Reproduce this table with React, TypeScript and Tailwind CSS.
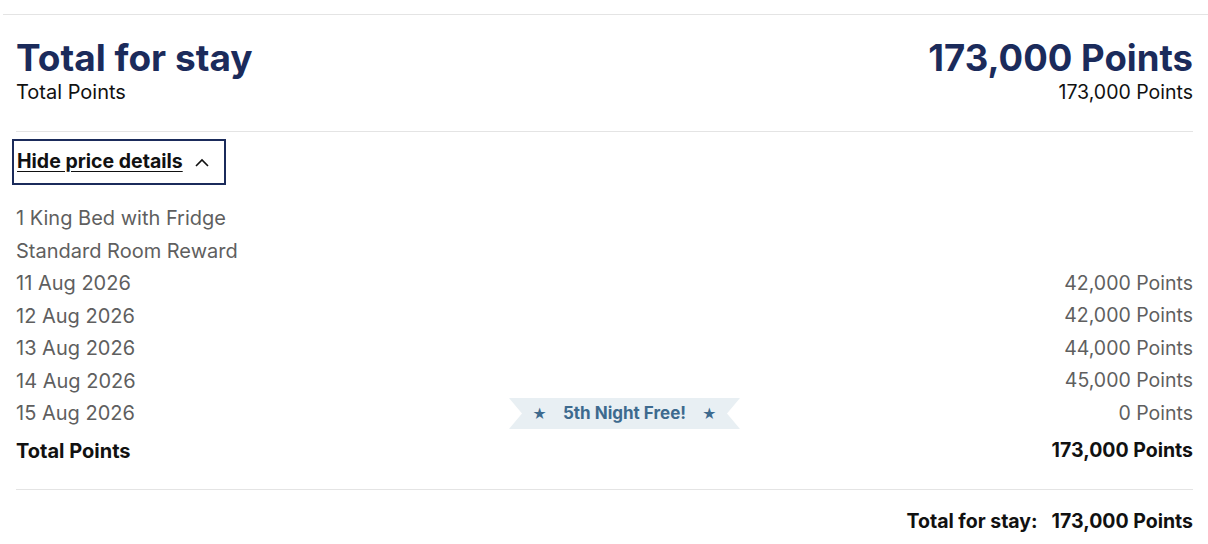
import React from "react";

const rows = [
  { d: "11 Aug 2026", p: "42,000 Points" },
  { d: "12 Aug 2026", p: "42,000 Points" },
  { d: "13 Aug 2026", p: "44,000 Points" },
  { d: "14 Aug 2026", p: "45,000 Points" },
];

function Ribbon() {
  return (
    <div className="relative flex h-[31px] w-[231px] items-center justify-center">
      <svg className="absolute inset-0" width="231" height="31" viewBox="0 0 231 31">
        <polygon points="0,0 231,0 218,15.5 231,31 0,31 13,15.5" fill="#e8eff3" />
      </svg>
      <span className="relative flex items-center gap-[16px] text-[17px] font-bold text-[#3d6a8e]">
        <span className="text-[14px]">★</span>
        <span>5th Night Free!</span>
        <span className="text-[14px]">★</span>
      </span>
    </div>
  );
}

export default function App() {
  return (
    <div className="w-[1208px] bg-white pt-[14px] font-['Inter',sans-serif]">
      <div className="ml-[3px] border-t border-[#e4e4e4]" />
      <div className="pl-[16px] pr-[15px]">
        <div className="flex items-start justify-between pt-[21px] pb-[27px] border-b border-[#e4e4e4]">
          <div>
            <div className="text-[37px] font-bold leading-[44px] text-[#1b2b5b]">Total for stay</div>
            <div className="text-[20px] leading-[24px] text-[#111]">Total Points</div>
          </div>
          <div className="text-right">
            <div className="text-[36.5px] font-bold leading-[44px] text-[#1b2b5b]">173,000 Points</div>
            <div className="text-[19.5px] leading-[24px] text-[#111]">173,000 Points</div>
          </div>
        </div>
        <div className="pt-[7px]">
          <button className="-ml-[4px] flex h-[46px] items-center gap-[12px] border-2 border-[#1b2b5b] px-[3px] pr-[15px]">
            <span className="text-[19.5px] font-bold text-[#111] underline underline-offset-[3px]">Hide price details</span>
            <svg width="14" height="9" viewBox="0 0 14 9" fill="none">
              <path d="M1 8 L7 2 L13 8" stroke="#111" strokeWidth="1.6" />
            </svg>
          </button>
        </div>
        <div className="pt-[17px] text-[20px] text-[#5f5f5f]">
          <div className="h-[32.5px] leading-[32.5px]">1 King Bed with Fridge</div>
          <div className="h-[32.5px] leading-[32.5px]">Standard Room Reward</div>
          {rows.map((r) => (
            <div key={r.d} className="flex h-[32.5px] items-center justify-between">
              <span>{r.d}</span>
              <span className="text-[19.5px]">{r.p}</span>
            </div>
          ))}
          <div className="flex h-[32.5px] items-center justify-between">
            <span className="w-[200px]">15 Aug 2026</span>
            <div className="ml-[293px]">
              <Ribbon />
            </div>
            <span className="flex-1 text-right text-[19.5px]">0 Points</span>
          </div>
          <div className="flex h-[42px] items-center justify-between font-bold text-[#111]">
            <span>Total Points</span>
            <span className="text-[19.5px]">173,000 Points</span>
          </div>
        </div>
        <div className="mt-[17px] border-t border-[#e4e4e4] pt-[17px] pb-[14px] flex justify-end gap-[14px] text-[19.5px] font-bold text-[#111]">
          <span>Total for stay:</span>
          <span>173,000 Points</span>
        </div>
      </div>
    </div>
  );
}
